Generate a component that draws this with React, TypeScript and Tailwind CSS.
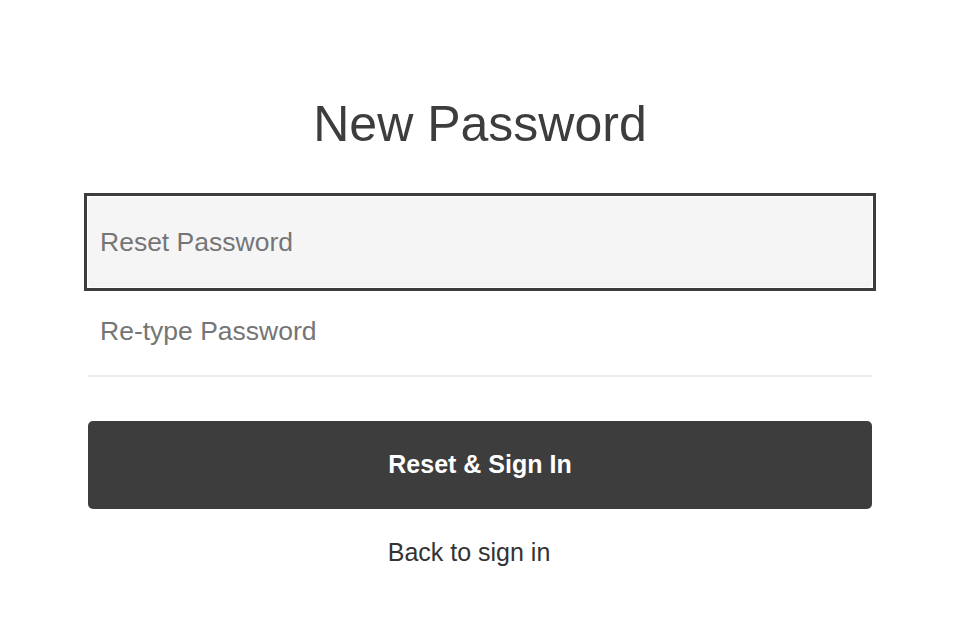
export default function App() {
  return (
    <div className="min-h-[638px] w-full bg-white font-['Liberation_Sans',Arial,sans-serif]">
      <div className="ml-[88px] w-[784px] pt-[99px]">
        <h1 className="text-center text-[50px] leading-[50px] font-normal text-[#3d3d3d]">
          New Password
        </h1>

        <form className="mt-[44px] flex flex-col" onSubmit={(e) => e.preventDefault()}>
          {/* focused field */}
          <div className="-mx-1 border-[3px] border-[#3d3d3d] bg-white p-px">
            <input
              type="password"
              placeholder="Reset Password"
              className="block h-[90px] w-full rounded-[4px] bg-[#f5f5f5] px-3 text-[26.5px] text-[#3d3d3d] outline-none placeholder:text-[#757575]"
            />
          </div>
          <input
            type="password"
            placeholder="Re-type Password"
            className="h-[86px] w-full border-b-2 border-[#ebebeb] bg-transparent px-3 pb-[3px] text-[26.5px] text-[#3d3d3d] outline-none placeholder:text-[#757575]"
          />

          <button
            type="submit"
            className="mt-[44px] h-[88px] w-full rounded-[5px] bg-[#3d3d3d] text-[25px] font-bold text-white"
          >
            Reset &amp; Sign In
          </button>
        </form>

        <div className="mt-[27px] pr-[22px] text-center">
          <a href="#" className="text-[25px] leading-[32px] text-[#333333]">
            Back to sign in
          </a>
        </div>
      </div>
    </div>
  );
}
